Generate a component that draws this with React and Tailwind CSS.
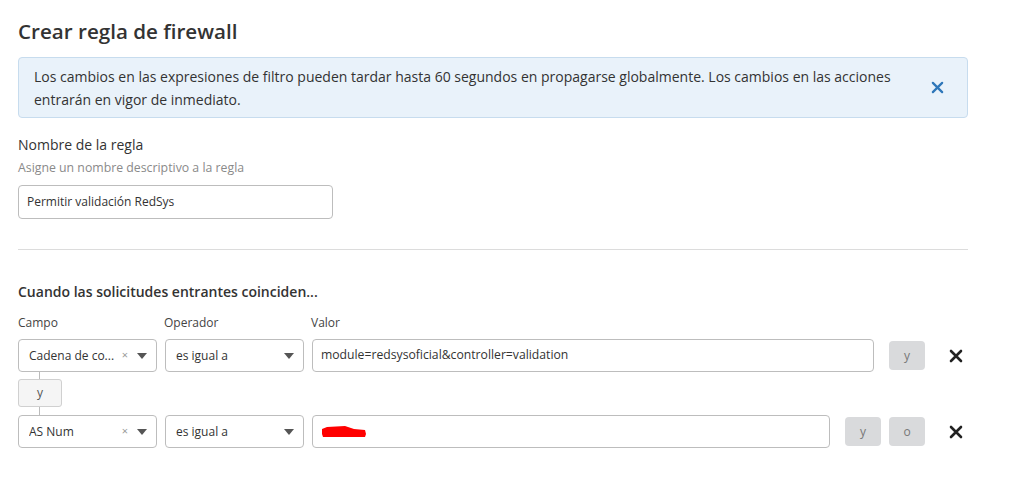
import React from 'react';

function Caret() {
  return (
    <svg width="10" height="6" viewBox="0 0 10 6" className="shrink-0">
      <path d="M0 0 L10 0 L5 6 Z" fill="#555" />
    </svg>
  );
}

function Select({ value, clearable }) {
  return (
    <div className="w-[139px] h-[33px] border border-[#bdbdbd] rounded-[4px] bg-white flex items-center pl-[10px] pr-[9px] text-[12px] text-[#333]">
      <span className="flex-1 truncate">{value}</span>
      {clearable && <span className="text-[#999] text-[11px] mr-[9px]">×</span>}
      <Caret />
    </div>
  );
}

function GrayBtn({ children }) {
  return (
    <div className="w-[36px] h-[29px] rounded-[4px] bg-[#d9dadc] flex items-center justify-center text-[12px] text-[#777]">
      {children}
    </div>
  );
}

function CloseX({ size = 14, color = '#222', stroke = 2.6 }) {
  return (
    <svg width={size} height={size} viewBox="0 0 14 14">
      <path d="M2 2 L12 12 M12 2 L2 12" stroke={color} strokeWidth={stroke} strokeLinecap="round" />
    </svg>
  );
}

export default function App() {
  return (
    <div className="w-[1024px] h-[497px] bg-white pl-[18px] pr-[56px] pt-[17px] text-[#333]" style={{ fontFamily: '"Open Sans", "Noto Sans", sans-serif' }}>
      {/* ─── HEADER ───────────────────────────── */}
      <h1 className="text-[20.6px] font-semibold text-[#333] leading-[28px]">Crear regla de firewall</h1>

      <div className="mt-[12px] h-[61px] bg-[#e9f2fa] border border-[#c7dcee] rounded-[4px] flex items-center pl-[15px] pr-[23px]">
        <p className="w-[870px] text-[14px] leading-[23px] text-[#333]">
          Los cambios en las expresiones de filtro pueden tardar hasta 60 segundos en propagarse globalmente. Los cambios en las acciones entrarán en vigor de inmediato.
        </p>
        <div className="ml-auto"><CloseX size={13} color="#2f77b9" stroke={2.4} /></div>
      </div>

      {/* ─── NOMBRE ───────────────────────────── */}
      <div className="mt-[17px] text-[14px] leading-[20px]">Nombre de la regla</div>
      <div className="mt-[5px] text-[12.3px] leading-[16px] text-[#8a8a8a]">Asigne un nombre descriptivo a la regla</div>
      <div className="mt-[9px] w-[315px] h-[34px] border border-[#bdbdbd] rounded-[4px] flex items-center pl-[8px] text-[12px]">
        Permitir validación RedSys
      </div>

      <div className="mt-[30px] border-t border-[#dcdcdc]" />

      {/* ─── CONDICIONES ──────────────────────── */}
      <div className="mt-[33px] text-[14px] font-semibold leading-[18px] text-[#333]">Cuando las solicitudes entrantes coinciden...</div>

      <div className="mt-[14px] flex text-[12px] leading-[16px] text-[#444]">
        <span className="w-[146px]">Campo</span>
        <span className="w-[147px]">Operador</span>
        <span>Valor</span>
      </div>

      <div className="mt-[8px] flex items-center">
        <Select value="Cadena de co..." clearable />
        <div className="ml-[8px]"><Select value="es igual a" /></div>
        <div className="ml-[8px] w-[562px] h-[33px] border border-[#bdbdbd] rounded-[4px] flex items-center pl-[8px] text-[12.2px]">
          module=redsysoficial&amp;controller=validation
        </div>
        <div className="ml-[15px]"><GrayBtn>y</GrayBtn></div>
        <div className="ml-[24px]"><CloseX /></div>
      </div>

      <div className="flex flex-col items-start">
        <div className="ml-[21px] w-px h-[7px] bg-[#bbb]" />
        <div className="w-[44px] h-[28px] bg-[#f5f5f5] border border-[#d0d0d0] rounded-[3px] flex items-center justify-center text-[12px] text-[#555]">y</div>
        <div className="ml-[21px] w-px h-[8px] bg-[#bbb]" />
      </div>

      <div className="flex items-center">
        <Select value="AS Num" clearable />
        <div className="ml-[8px]"><Select value="es igual a" /></div>
        <div className="ml-[8px] w-[518px] h-[33px] border border-[#bdbdbd] rounded-[4px] flex items-center pl-[8px]">
          <svg width="46" height="14" viewBox="0 0 46 14">
            <path d="M1 4 L6 2 L24 1 L33 4 L44 5 L45 9 L44 12 L2 12 L1 9 Z" fill="#ff0000" />
          </svg>
        </div>
        <div className="ml-[15px]"><GrayBtn>y</GrayBtn></div>
        <div className="ml-[8px]"><GrayBtn>o</GrayBtn></div>
        <div className="ml-[24px]"><CloseX /></div>
      </div>
    </div>
  );
}
